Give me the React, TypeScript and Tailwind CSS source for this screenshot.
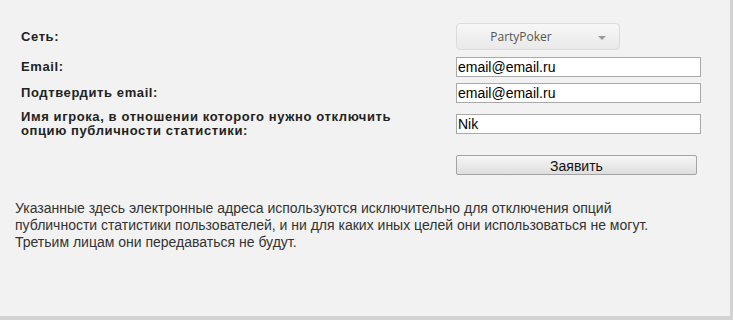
import React from "react";

const labelCls =
  "w-[435px] shrink-0 text-[13px] font-bold leading-[14px] tracking-[0.6px] text-[#222] [font-family:'Liberation_Sans',Arial,sans-serif]";
const inputCls =
  "h-[20px] w-[245px] border border-[#a9a9a9] bg-white px-[1px] text-[14px] text-black outline-none [font-family:'Liberation_Sans',Arial,sans-serif]";

export default function App() {
  return (
    <div className="h-[320px] w-[733px] bg-[#d3d3d3]">
      <div className="h-[316px] w-[730px] bg-[#f2f2f2] pt-[23px]">
        <div className="pl-[21px]">
          {/* Network */}
          <div className="flex h-[27px] items-center">
            <div className={labelCls}>Сеть:</div>
            <button
              type="button"
              className="relative flex h-[27px] w-[164px] items-center justify-center rounded-[4px] border border-[#dcdcdc] bg-gradient-to-b from-[#f7f7f7] to-[#e9e9e9] pr-[34px] text-[12px] text-[#555] [font-family:'Open_Sans',Verdana,sans-serif]"
            >
              PartyPoker
              <span className="absolute right-[13px] top-[12px] h-0 w-0 border-x-[4px] border-t-[4px] border-x-transparent border-t-[#999]" />
            </button>
          </div>

          <div className="mt-[7px] flex h-[20px] items-center">
            <div className={labelCls}>Email:</div>
            <input className={inputCls} defaultValue="email@email.ru" />
          </div>

          <div className="mt-[6px] flex h-[20px] items-center">
            <div className={labelCls}>Подтвердить email:</div>
            <input className={inputCls} defaultValue="email@email.ru" />
          </div>

          <div className="mt-[3px] flex items-start">
            <div className={labelCls + " pt-[4px]"}>
              Имя игрока, в отношении которого нужно отключить
              <br />
              опцию публичности статистики:
            </div>
            <input className={inputCls + " mt-[8px]"} defaultValue="Nik" />
          </div>

          <div className="mt-[17px] flex">
            <div className="w-[435px] shrink-0" />
            <button
              type="button"
              className="h-[20px] w-[241px] rounded-[2px] border border-[#a3a3a3] bg-gradient-to-b from-[#f6f6f6] to-[#dedede] text-[14px] text-[#111] [font-family:'Liberation_Sans',Arial,sans-serif]"
            >
              Заявить
            </button>
          </div>
        </div>

        <p className="mt-[25px] pl-[15px] text-[14px] leading-[17px] text-[#333] [font-family:'Liberation_Sans',Arial,sans-serif]">
          Указанные здесь электронные адреса используются исключительно для отключения опций
          <br />
          публичности статистики пользователей, и ни для каких иных целей они использоваться не могут.
          <br />
          Третьим лицам они передаваться не будут.
        </p>
      </div>
    </div>
  );
}
